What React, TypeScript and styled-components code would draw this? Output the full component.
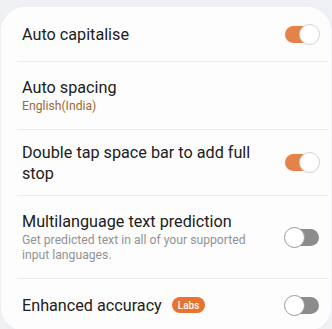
import React from 'react';
import styled, {createGlobalStyle} from 'styled-components';

const GlobalStyle = createGlobalStyle`
  html, body { margin: 0; padding: 0; background: #eff0f3; }
  body { font-family: Roboto, "Noto Sans", "Liberation Sans", sans-serif; -webkit-font-smoothing: antialiased; }
`;

const Page = styled.div`
  width: 332px;
  height: 329px;
  overflow: hidden;
  padding-top: 7px;
  box-sizing: border-box;
  background: #eff0f3;
`;

const Card = styled.div`
  margin: 0 1px;
  background: #fdfdfd;
  border-radius: 24px;
  overflow: hidden;
`;

const Row = styled.div<{$height: number}>`
  display: flex;
  align-items: center;
  min-height: ${p => p.$height}px;
  padding: 0 11px 0 21px;
`;

const Divider = styled.div`
  height: 1px;
  margin: 0 2px 0 16px;
  background: #ececec;
`;

const TextBlock = styled.div`
  flex: 1;
  max-width: 242px;
  display: flex;
  flex-direction: column;
`;

const Title = styled.div`
  display: flex;
  align-items: center;
  gap: 10px;
  font-size: 16.2px;
  line-height: 21px;
  color: #202020;
`;

const Sub = styled.div<{$accent?: boolean}>`
  font-size: 12.2px;
  line-height: 15px;
  margin-top: 1px;
  color: ${p => (p.$accent ? '#9c6a34' : '#939393')};
`;

const Badge = styled.span`
  display: inline-flex;
  align-items: center;
  justify-content: center;
  height: 16px;
  padding: 0 6px;
  border-radius: 8px;
  background: #e8722f;
  color: #fff;
  font-size: 10px;
  font-weight: 500;
`;

const Track = styled.div<{$on: boolean}>`
  position: relative;
  margin-left: auto;
  width: 36px;
  height: 21px;
  flex-shrink: 0;
  &::before {
    content: '';
    position: absolute;
    left: 1px;
    right: 1px;
    top: 2px;
    bottom: 2px;
    border-radius: 9px;
    background: ${p => (p.$on ? '#e5824a' : '#8c8c8c')};
  }
`;

const Thumb = styled.div<{$on: boolean}>`
  position: absolute;
  top: 0;
  ${p => (p.$on ? 'right: 0;' : 'left: 0;')}
  width: 21px;
  height: 21px;
  box-sizing: border-box;
  border-radius: 50%;
  background: #fff;
  border: 1.5px solid ${p => (p.$on ? '#d9cfc8' : '#9a9a9a')};
`;

const Toggle = ({on}: {on: boolean}) => (
  <Track $on={on}>
    <Thumb $on={on} />
  </Track>
);

export default function App() {
  return (
    <Page>
      <GlobalStyle />
      <Card>
        <Row $height={54}>
          <TextBlock>
            <Title>Auto capitalise</Title>
          </TextBlock>
          <Toggle on />
        </Row>
        <Divider />
        <Row $height={67}>
          <TextBlock>
            <Title>Auto spacing</Title>
            <Sub $accent>English(India)</Sub>
          </TextBlock>
        </Row>
        <Divider />
        <Row $height={65}>
          <TextBlock>
            <Title>Double tap space bar to add full stop</Title>
          </TextBlock>
          <Toggle on />
        </Row>
        <Divider />
        <Row $height={82}>
          <TextBlock>
            <Title>Multilanguage text prediction</Title>
            <Sub>Get predicted text in all of your supported input languages.</Sub>
          </TextBlock>
          <Toggle on={false} />
        </Row>
        <Divider />
        <Row $height={52}>
          <TextBlock>
            <Title>
              Enhanced accuracy <Badge>Labs</Badge>
            </Title>
          </TextBlock>
          <Toggle on={false} />
        </Row>
      </Card>
    </Page>
  );
}
